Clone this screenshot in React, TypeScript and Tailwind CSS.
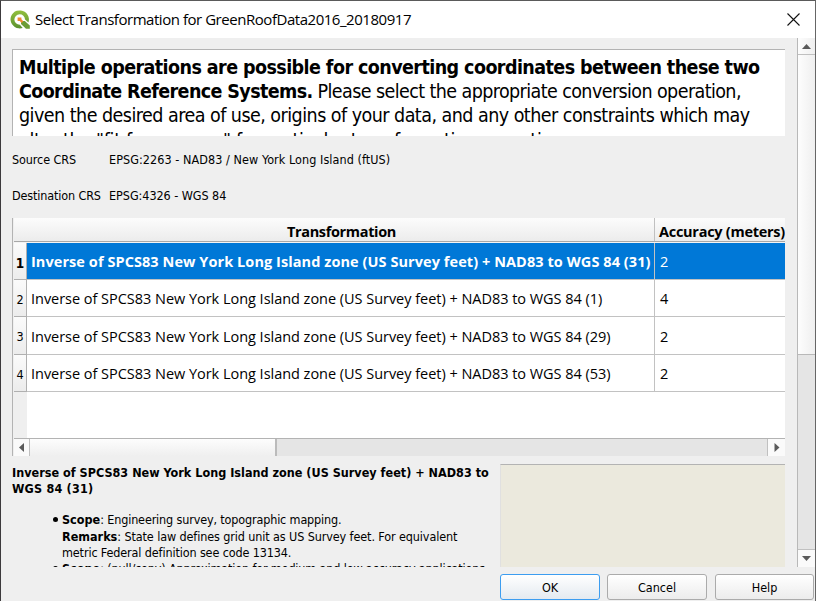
const BASE = "Inverse of SPCS83 New York Long Island zone (US Survey feet) + NAD83 to WGS 84 ";

const ROWS = [
  { n: 1, name: BASE + "(31)", acc: 2, h: "h-[37px]", selected: true },
  { n: 2, name: BASE + "(1)", acc: 4, h: "h-[37px]", selected: false },
  { n: 3, name: BASE + "(29)", acc: 2, h: "h-[38px]", selected: false },
  { n: 4, name: BASE + "(53)", acc: 2, h: "h-[37px]", selected: false },
];

function Logo() {
  return (
    <svg className="h-5 w-5 shrink-0" viewBox="0 0 20 20">
      <defs>
        <linearGradient id="ring" x1="0" y1="0" x2="0" y2="1">
          <stop offset="0" stopColor="#93c03e" />
          <stop offset="1" stopColor="#5b9130" />
        </linearGradient>
      </defs>
      <path d="M12.700 17.900A9.200 9 0 1 1 18.400 12.400L15 9.400A5.300 5.200 0 1 0 9.900 14.700z" fill="url(#ring)" />
      <path d="M11 11h3.800l5 4.600v3.100h-3.800L11 14z" fill="#6c9c35" />
      <path d="M7.600 7.400h3.800v1.900l1.900 1.900-1.700 1.700-1.800-1.900H7.600z" fill="#ee8a30" />
    </svg>
  );
}

function Arrow({ d }: { d: string }) {
  return (
    <svg className="h-[9px] w-[9px]" viewBox="0 0 9 9">
      <path d={d} fill="#5a5a5a" />
    </svg>
  );
}

function Intro() {
  return (
    <div className="h-[87px] shrink-0 overflow-hidden border-l border-t border-[#b3b3b3] bg-white pl-[6px] pt-[6px] text-[19.5px] leading-6 whitespace-nowrap">
      <div className="font-bold tracking-[-0.58px]">Multiple operations are possible for converting coordinates between these two</div>
      <div>
        <b className="tracking-[-0.62px]">Coordinate Reference Systems.</b>
        <span className="tracking-[-0.59px]"> Please select the appropriate conversion operation,</span>
      </div>
      <div className="tracking-[-0.53px]">given the desired area of use, origins of your data, and any other constraints which may</div>
      <div className="pt-px tracking-[-0.34px]">alter the "fit for purpose" for particular transformation operations.</div>
    </div>
  );
}

function TransformTable() {
  return (
    <div className="mt-[13px] flex h-[238px] shrink-0 flex-col overflow-hidden border-l border-[#b3b3b3] pl-px font-['Open_Sans',sans-serif] text-[14.5px] [font-stretch:100%]">
      <div className="flex h-[24px] shrink-0 border-b border-[#a8a8a8] bg-linear-to-b from-[#fcfcfc] to-[#ececec] font-bold leading-[27px]">
        <div className="w-[641px] shrink-0 border-r border-[#c0c0c0] pl-[15px] text-center tracking-[-0.35px]">Transformation</div>
        <div className="flex-1 overflow-hidden pl-1 tracking-[-0.27px] whitespace-nowrap">Accuracy (meters)</div>
      </div>
      <div className="flex h-[196px] shrink-0 flex-col bg-white">
        <div className="h-px shrink-0 bg-[#f4f4f4]" />
        {ROWS.map((r) => (
          <div key={r.n} className={"flex shrink-0 whitespace-nowrap " + r.h}>
            <div className={"flex w-[13px] shrink-0 items-center justify-center border-b border-r border-[#b0b0b0] bg-linear-to-b from-[#fbfbfb] to-[#ececec] pt-[4px] font-['DejaVu_Sans_Condensed','DejaVu_Sans',sans-serif] [font-stretch:condensed] " + (r.selected ? "text-[13.5px] font-bold" : "text-[12.5px]")}>
              {r.n}
            </div>
            <div className={"flex w-[628px] shrink-0 items-center border-b border-r border-[#c2c2c2] pl-1 pt-[2px] " + (r.selected ? "bg-[#0078d7] font-bold tracking-[0.07px] text-white" : "tracking-[-0.03px]")}>
              {r.name}
            </div>
            <div className={"flex flex-1 items-center border-b border-[#c2c2c2] pl-[5px] pt-[2px] " + (r.selected ? "bg-[#0078d7] text-white" : "")}>{r.acc}</div>
          </div>
        ))}
        <div className="w-[13px] flex-1 bg-[#efefef]" />
      </div>
      <div className="flex h-[18px] shrink-0 border-t border-[#b3b3b3] bg-[#e5e5e5]">
        <div className="flex w-[16px] items-center justify-center border-r border-[#c0c0c0] bg-[#fafafa]"><Arrow d="M7 0v9L2 4.5z" /></div>
        <div className="w-[247px] border-r-2 border-[#bbb] bg-linear-to-b from-[#fdfdfd] to-[#efefef]" />
        <div className="flex-1" />
        <div className="flex w-[18px] items-center justify-center border-l border-[#c0c0c0] bg-[#fafafa]"><Arrow d="M2.500 0v9l5-4.5z" /></div>
      </div>
    </div>
  );
}

function Bullet() {
  return <span className="mr-[4px] -ml-[9px] mt-[5px] h-[5px] w-[5px] shrink-0 rounded-full bg-black" />;
}

function Details() {
  return (
    <div className="mt-[8px] flex h-[103px] shrink-0">
      <div className="w-[488px] overflow-hidden pt-px whitespace-nowrap leading-4">
        <div className="font-bold tracking-[0.01px]">Inverse of SPCS83 New York Long Island zone (US Survey feet) + NAD83 to</div>
        <div className="font-bold tracking-[0.2px]">WGS 84 (31)</div>
        <ul className="mt-[15px] pl-[50px]">
          <li className="flex">
            <Bullet />
            <div>
              <div className="tracking-[-0.15px]"><b className="tracking-normal">Scope</b>: Engineering survey, topographic mapping.</div>
              <div className="mt-px tracking-[-0.11px]"><b className="tracking-normal">Remarks</b>: State law defines grid unit as US Survey feet. For equivalent</div>
              <div className="tracking-[-0.13px]">metric Federal definition see code 13134.</div>
            </div>
          </li>
          <li className="flex">
            <Bullet />
            <div className="tracking-[-0.15px]"><b className="tracking-normal">Scope</b>: (null/copy) Approximation for medium and low accuracy applications</div>
          </li>
        </ul>
      </div>
      <div className="flex-1 border-l border-t border-[#b3b3b3] border-l-[#e0e0e0] bg-[#ebe9dd]" />
    </div>
  );
}

function ScrollBar() {
  return (
    <div className="flex h-[529px] w-[18px] shrink-0 flex-col border-l border-[#b8b8b8] bg-[#e5e5e5]">
      <div className="flex h-[17px] items-center justify-center border-b border-[#c0c0c0] bg-linear-to-r from-[#fdfdfd] to-[#efefef]"><Arrow d="M0 7h9L4.500 2z" /></div>
      <div className="h-[300px] border-b border-[#b8b8b8] bg-linear-to-r from-[#fdfdfd] to-[#efefef]" />
      <div className="flex-1" />
      <div className="flex h-[18px] items-center justify-center border-t border-[#c0c0c0] bg-[#fafafa]"><Arrow d="M0 2h9L4.500 7z" /></div>
    </div>
  );
}

export default function App() {
  return (
    <div className="flex h-[601px] w-[816px] flex-col overflow-hidden border-l border-r border-t border-[#3c3a3c] border-r-[#666] border-t-[#5a5a5a] bg-[#efefef] font-['DejaVu_Sans_Condensed','DejaVu_Sans',sans-serif] text-[12.5px] text-black [font-stretch:condensed]">
      <header className="flex h-[37px] shrink-0 items-center bg-white pl-[9px] pr-[15px] font-['Open_Sans',sans-serif] [font-stretch:100%]">
        <Logo />
        <h1 className="ml-[5px] text-[15px] tracking-[-0.46px] whitespace-nowrap">Select Transformation for GreenRoofData2016_20180917</h1>
        <svg className="ml-auto h-[13px] w-[13px]" viewBox="0 0 13 13"><path d="M.5.5l12 12M12.500.5l-12 12" stroke="#111" strokeWidth="1.1" /></svg>
      </header>
      <main className="flex h-[529px] shrink-0">
        <div className="flex w-[784px] shrink-0 flex-col pl-[11px] pt-[11px]">
          <Intro />
          <div className="mt-[15px] flex h-[18px] items-center whitespace-nowrap">
            <div className="w-[97px] tracking-[-0.1px]">Source CRS</div>
            <div className="tracking-[0.06px]">EPSG:2263 - NAD83 / New York Long Island (ftUS)</div>
          </div>
          <div className="mt-[18px] flex h-[18px] items-center whitespace-nowrap">
            <div className="w-[97px] tracking-[-0.14px]">Destination CRS</div>
            <div className="tracking-[-0.05px]">EPSG:4326 - WGS 84</div>
          </div>
          <TransformTable />
          <Details />
        </div>
        <div className="w-[12px] shrink-0" />
        <ScrollBar />
      </main>
      <footer className="flex h-[33px] shrink-0 items-start pl-[499px] pt-[7px]">
        <button className="mr-[7px] h-[26px] w-[100px] rounded-[3px] border border-[#3c9df0] bg-linear-to-b from-white to-[#e4eaf0] pt-[2px]">OK</button>
        <button className="mr-[8px] h-[26px] w-[100px] rounded-[3px] border border-[#ababab] bg-linear-to-b from-white to-[#ececec] pt-[2px]">Cancel</button>
        <button className="h-[26px] w-[99px] shrink-0 rounded-[3px] border border-[#ababab] bg-linear-to-b from-white to-[#ececec] pt-[2px]">Help</button>
      </footer>
    </div>
  );
}
